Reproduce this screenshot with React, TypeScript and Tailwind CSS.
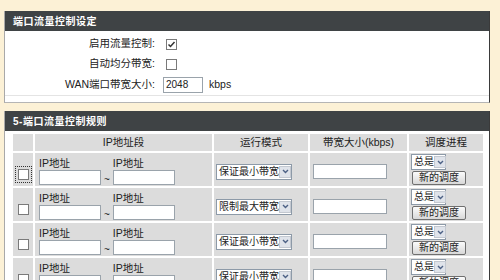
import React from 'react';

const font = "font-['Liberation_Sans','Noto_Sans_CJK_SC',sans-serif]";

const rules = ['保证最小带宽', '限制最大带宽', '保证最小带宽', '保证最小带宽'];

function Arrow() {
  return (
    <span className="flex shrink-0 items-center justify-center w-[12px] h-[12px] bg-[#dfe3ea] border border-[#c3c8d0]">
      <svg width="7" height="5" viewBox="0 0 7 5">
        <path d="M1 1 L3.5 3.5 L6 1" fill="none" stroke="#4d6185" strokeWidth="1.4" />
      </svg>
    </span>
  );
}

function Sel({ text, w }: { text: string; w: string }) {
  return (
    <div className={`${w} h-[16px] flex items-center justify-between bg-white border border-[#8d9aa8] pl-[2px] pr-[1px] whitespace-nowrap`}>
      <span className="text-[10px] leading-none text-[#222]">{text}</span>
      <Arrow />
    </div>
  );
}

function Box({ checked, focus }: { checked?: boolean; focus?: boolean }) {
  return (
    <div className={focus ? 'p-[2px] border border-dotted border-[#333]' : 'p-[3px]'}>
      <div className="w-[11px] h-[11px] bg-white border border-[#7a7a7a] flex items-center justify-center">
        {checked && (
          <svg width="9" height="9" viewBox="0 0 9 9">
            <path d="M1.5 4.5 L3.5 6.5 L7.5 2" fill="none" stroke="#333" strokeWidth="1.5" />
          </svg>
        )}
      </div>
    </div>
  );
}

function Field({ w }: { w: string }) {
  return <div className={`${w} h-[15px] bg-white border border-[#9aa3ab]`} />;
}

export default function App() {
  return (
    <div className={`w-[500px] h-[280px] overflow-hidden bg-[#fcf1d6] pt-[11px] ${font}`}>
      {/* panel 1 */}
      <div className="ml-[4px] w-[486px] bg-white border-l border-[#a9a9a9] border-r border-r-[#3a3a3a] border-b border-b-[#b5b5b5]">
        <div className="h-[20px] bg-[#3f4345] text-white text-[10px] font-bold flex items-center pl-[8px] tracking-[0.5px]">端口流量控制设定</div>
        <div className="pt-[3px] pb-[6px] text-[10.5px] text-[#222]">
          <div className="h-[20px] flex items-center">
            <span className="w-[150px] text-right">启用流量控制:</span>
            <span className="ml-[8px]"><Box checked /></span>
          </div>
          <div className="h-[20px] flex items-center">
            <span className="w-[150px] text-right">自动均分带宽:</span>
            <span className="ml-[8px]"><Box /></span>
          </div>
          <div className="h-[22px] flex items-center border-b border-[#e4e4e4]">
            <span className="w-[150px] text-right">WAN端口带宽大小:</span>
            <div className="ml-[8px] w-[40px] h-[16px] bg-white border border-[#9aa3ab] flex items-center pl-[2px] text-[10px]">2048</div>
            <span className="ml-[6px]">kbps</span>
          </div>
        </div>
      </div>

      {/* panel 2 */}
      <div className="mt-[8px] ml-[4px] w-[486px] bg-white border-l border-[#a9a9a9] border-r border-r-[#3a3a3a]">
        <div className="h-[20px] bg-[#3f4345] text-white text-[10px] font-bold flex items-center pl-[8px] tracking-[0.5px]">5-端口流量控制规则</div>
        <div className="pl-[8px] pt-[3px]">
          <div className="w-[470px] grid grid-cols-[20px_177px_94px_97px_74px] gap-[2px] text-[10.5px] text-[#222]">
            <div className="h-[17px] bg-[#dcdcdc]" />
            <div className="h-[17px] bg-[#dcdcdc] flex items-center justify-center">IP地址段</div>
            <div className="h-[17px] bg-[#dcdcdc] flex items-center justify-center">运行模式</div>
            <div className="h-[17px] bg-[#dcdcdc] flex items-center justify-center">带宽大小(kbps)</div>
            <div className="h-[17px] bg-[#dcdcdc] flex items-center justify-center">调度进程</div>
            {rules.map((r, i) => (
              <React.Fragment key={i}>
                <div className="h-[33px] bg-[#dcdcdc] flex items-center justify-center pt-[9px]">
                  <Box focus={i === 0} />
                </div>
                <div className="h-[33px] bg-[#dcdcdc] flex items-start pl-[4px] pt-[4px] gap-[3px]">
                  <div className="flex flex-col">
                    <span className="leading-[13px]">IP地址</span>
                    <Field w="w-[62px]" />
                  </div>
                  <span className="self-end leading-[12px] text-[10px]">~</span>
                  <div className="flex flex-col">
                    <span className="leading-[13px]">IP地址</span>
                    <Field w="w-[62px]" />
                  </div>
                </div>
                <div className="h-[33px] bg-[#dcdcdc] flex items-center pl-[2px] pt-[4px]">
                  <Sel text={r} w="w-[76px]" />
                </div>
                <div className="h-[33px] bg-[#dcdcdc] flex items-center pl-[3px] pt-[3px]">
                  <Field w="w-[74px]" />
                </div>
                <div className="h-[33px] bg-[#dcdcdc] flex flex-col pl-[2px] pt-[1px] gap-[1px]">
                  <Sel text="总是" w="w-[35px]" />
                  <div className="w-[54px] h-[14px] ml-[1px] flex items-center justify-center text-[10px] leading-none whitespace-nowrap border border-[#6f6f6f] rounded-[2px] bg-gradient-to-b from-[#fbfbfb] to-[#d8d8d8]">新的调度</div>
                </div>
              </React.Fragment>
            ))}
          </div>
        </div>
      </div>
    </div>
  );
}
